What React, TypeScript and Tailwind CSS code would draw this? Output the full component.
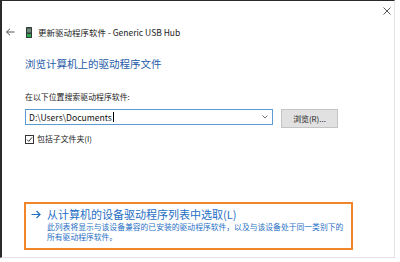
import React from "react";

const cjk = { fontFamily: '"Noto Sans CJK SC", "Noto Sans", sans-serif' };

function BackArrow() {
  return (
    <svg width="9" height="8" viewBox="0 0 9 8" className="text-[#555]">
      <path d="M0.5 4H8.5M0.5 4L4 0.8M0.5 4L4 7.2" stroke="currentColor" strokeWidth="1" fill="none" />
    </svg>
  );
}

function DeviceIcon() {
  return (
    <svg width="6" height="11" viewBox="0 0 6 11">
      <rect x="0" y="0" width="6" height="11" rx="0.5" fill="#2f3b36" />
      <rect x="1" y="1.5" width="4" height="4" fill="#6d8a7a" />
      <rect x="1" y="7" width="4" height="3" fill="#2fa84f" />
    </svg>
  );
}

function CloseIcon() {
  return (
    <svg width="8" height="8" viewBox="0 0 8 8">
      <path d="M0.5 0.5L7.5 7.5M7.5 0.5L0.5 7.5" stroke="#444" strokeWidth="0.9" />
    </svg>
  );
}

export default function App() {
  return (
    <div className="w-[400px] h-[262px] bg-white overflow-hidden" style={cjk}>
      <div className="w-[395px] h-[258px] border-l-2 border-t border-[#2b2b2b] border-r border-b border-r-[#e3e3e3] border-b-[#e3e3e3] flex flex-col">
        {/* title bar */}
        <div className="h-[19px] flex justify-end items-center pr-[3px] pt-[1px]">
          <CloseIcon />
        </div>
        <div className="mt-[6px] h-[12px] flex items-center pl-[4px] text-[8.5px] text-[#222] leading-none">
          <BackArrow />
          <span className="ml-[11px] flex"><DeviceIcon /></span>
          <span className="ml-[6px] whitespace-nowrap">更新驱动程序软件 - Generic USB Hub</span>
        </div>

        <div className="pl-[23px] flex flex-col">
          <h1 className="mt-[19px] text-[10.5px] leading-[14px] text-[#1f5ca8] whitespace-nowrap">
            浏览计算机上的驱动程序文件
          </h1>

          <p className="mt-[20px] text-[7.9px] leading-[12px] text-[#222] whitespace-nowrap">
            在以下位置搜索驱动程序软件:
          </p>

          <div className="mt-[6px] flex items-start gap-[8px]">
            <div className="w-[248px] h-[16px] border border-[#5b9bd5] flex items-center pl-[3px] pr-[4px]">
              <span className="text-[8.6px] leading-none text-[#111] whitespace-nowrap">D:\Users\Documents</span>
              <span className="w-px h-[10px] bg-black ml-[1px]" />
              <span className="ml-auto flex">
                <svg width="6" height="4" viewBox="0 0 6 4">
                  <path d="M0.5 0.5L3 3L5.5 0.5" stroke="#666" strokeWidth="0.9" fill="none" />
                </svg>
              </span>
            </div>
            <button className="w-[57px] h-[19px] bg-[#e1e1e1] border border-[#c4c4c4] text-[7.9px] leading-none text-[#222] flex items-center justify-center">
              浏览(R)...
            </button>
          </div>

          <div className="mt-[5px] h-[12px] flex items-center">
            <span className="w-[9px] h-[9px] border border-[#333] flex items-center justify-center bg-white">
              <svg width="7" height="7" viewBox="0 0 7 7">
                <path d="M1 3.6L2.8 5.4L6 1.4" stroke="#222" strokeWidth="0.9" fill="none" />
              </svg>
            </span>
            <span className="ml-[3px] text-[7.9px] leading-none text-[#222] whitespace-nowrap">包括子文件夹(I)</span>
          </div>

          <div className="mt-[57px] -ml-px w-[329px] h-[48px] border-2 border-[#f0852a] flex pt-[3px] pl-[5px]">
            <svg width="10" height="9" viewBox="0 0 10 9" className="mt-[3px] shrink-0">
              <path d="M0.5 4.5H9M5.5 1L9 4.5L5.5 8" stroke="#1f6fc5" strokeWidth="1.2" fill="none" />
            </svg>
            <div className="ml-[6px] flex flex-col text-[#1f6fc5]">
              <span className="text-[11px] leading-[15px] whitespace-nowrap">从计算机的设备驱动程序列表中选取(L)</span>
              <span className="text-[7.8px] leading-[10px] whitespace-nowrap">此列表将显示与该设备兼容的已安装的驱动程序软件，以及与该设备处于同一类别下的</span>
              <span className="text-[7.8px] leading-[10px] whitespace-nowrap">所有驱动程序软件。</span>
            </div>
          </div>
        </div>
      </div>
    </div>
  );
}
